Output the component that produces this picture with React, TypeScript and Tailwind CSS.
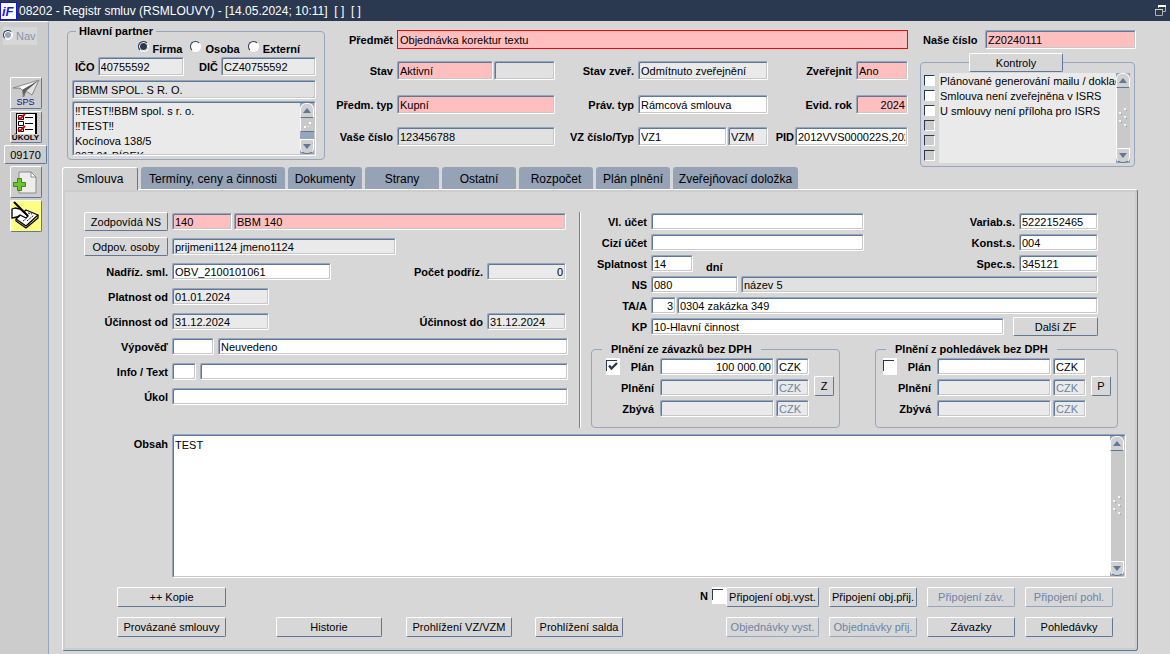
import type { ReactNode } from "react";
import clsx from "clsx";

type Tone = "white" | "locked" | "grey" | "pink";

const tones: Record<Tone, string> = {
  white: "bg-white",
  locked: "bg-[#eaeaea]",
  grey: "bg-[#e1e1e1]",
  pink: "bg-[#ffbfbf]",
};

const sunken =
  "rounded-[2px] border border-t-[#96a6bc] border-l-[#96a6bc] border-r-white border-b-white shadow-[inset_1px_1px_0_#5f7899,inset_-1px_-1px_0_#c8c8c8]";

type FieldProps = {
  id?: string;
  label?: string;
  value?: string;
  tone?: Tone;
  className?: string;
  disabled?: boolean;
};

function Field({ id, label, value = "", tone = "white", className, disabled }: FieldProps) {
  return (
    <input
      id={id}
      aria-label={label}
      type="text"
      defaultValue={value}
      disabled={disabled}
      className={clsx(
        "min-w-0 px-[2px] text-[11px] leading-[13px] outline-none disabled:text-[#6c84a6]",
        sunken,
        tones[tone],
        className,
      )}
    />
  );
}

function Label({ htmlFor, className, children }: { htmlFor: string; className?: string; children: ReactNode }) {
  return (
    <label htmlFor={htmlFor} className={clsx("shrink-0 whitespace-nowrap text-right text-[11px] font-bold leading-[14px]", className)}>
      {children}
    </label>
  );
}

function Button({ className, disabled, label, children }: { className?: string; disabled?: boolean; label?: string; children: ReactNode }) {
  return (
    <button
      type="button"
      disabled={disabled}
      aria-label={label}
      className={clsx(
        "flex shrink-0 items-center justify-center whitespace-nowrap rounded-[2px] border border-t-white border-l-white border-r-[#5f7899] border-b-[#5f7899] text-[11px] leading-[14px] disabled:border-r-[#96a6bc] disabled:border-b-[#96a6bc] disabled:text-[#6c84a6]",
        className,
      )}
    >
      {children}
    </button>
  );
}

function Radio({ id, text, checked }: { id: string; text: string; checked?: boolean }) {
  return (
    <div className="flex items-center gap-[4px]">
      <input
        id={id}
        type="radio"
        name="typPartnera"
        defaultChecked={checked}
        className="mb-[4px] size-[11px] shrink-0 appearance-none rounded-full border border-t-[#2b3950] border-l-[#2b3950] border-r-white border-b-white bg-white checked:bg-[#2b3950] checked:shadow-[inset_0_0_0_1px_white]"
      />
      <Label htmlFor={id}>{text}</Label>
    </div>
  );
}

function FlagBox({ id, label, checked }: { id: string; label: string; checked?: boolean }) {
  return (
    <span className="relative flex h-[17px] w-[14px] shrink-0 bg-white">
      <input
        id={id}
        aria-label={label}
        type="checkbox"
        defaultChecked={checked}
        className="peer mt-[2px] size-[11px] appearance-none border-t border-l border-[#2b3950] bg-white"
      />
      <svg viewBox="0 0 14 17" className="pointer-events-none absolute inset-0 hidden peer-checked:block" fill="none" stroke="#2b3950" strokeWidth="2.4">
        <path d="M3 7.5 5.5 10.5 11 5" />
      </svg>
    </span>
  );
}

function ScrollBar({ className, grip }: { className?: string; grip: "small" | "tall" }) {
  const arrow = "flex h-[15px] shrink-0 items-center justify-center border border-white border-b-[#5f7899] bg-[#d0d0d0]";
  return (
    <div aria-hidden="true" className={clsx("flex w-[14px] shrink-0 flex-col bg-[#96a6bc]", className)}>
      <div className={clsx(arrow, "rounded-t-[6px]")}>
        <svg width="8" height="5" viewBox="0 0 8 5" fill="#5f7899">
          <path d="M4 0 8 5H0z" />
        </svg>
      </div>
      <div
        className={clsx(
          "flex items-center justify-center border-l border-white bg-[#c9c9c9]",
          grip === "small" ? "h-[14px] border-b border-b-[#5f7899]" : "flex-1",
        )}
      >
        {grip === "small" ? (
          <svg width="8" height="6" viewBox="0 0 8 6" fill="white">
            <path d="M0 4h2v2H0zM5 0h2v2H5zM4 4h1v1H4z" />
          </svg>
        ) : (
          <svg width="9" height="20" viewBox="0 0 9 20" fill="#f4f4f4">
            <path d="M5 0h2v2H5zM0 4h2v2H0zM5 8h2v2H5zM0 12h2v2H0zM5 16h2v2H5z" />
            <path d="M7 2h1v1H7zM2 6h1v1H2zM7 10h1v1H7zM2 14h1v1H2zM7 18h1v1H7z" fill="#8a99ae" />
          </svg>
        )}
      </div>
      {grip === "small" && <div className="flex-1" />}
      <div className={clsx(arrow, "rounded-b-[6px]")}>
        <svg width="8" height="5" viewBox="0 0 8 5" fill="#5f7899">
          <path d="M0 0h8L4 5z" />
        </svg>
      </div>
    </div>
  );
}

function TitleBar() {
  return (
    <header className="flex h-[21px] shrink-0 items-center bg-[#2b3950] pr-[4px] text-white">
      <span className="flex h-[18px] w-[17px] shrink-0 items-center justify-center border border-[#1414e0] bg-white">
        <svg width="15" height="16" viewBox="0 0 15 16" aria-hidden="true" className="shrink-0">
          <text x="1" y="13" fontSize="13" fontWeight="bold" fontStyle="italic" fill="#1a1ad0" fontFamily="Liberation Sans, sans-serif">
            iF
          </text>
        </svg>
      </span>
      <h1 className="ml-[2px] flex-1 whitespace-pre text-[12px] leading-[16px]">
        08202 - Registr smluv (RSMLOUVY) - [14.05.2024; 10:11]  [ ]  [ ]
      </h1>
      <button type="button" aria-label="Obnovit okno">
        <svg width="11" height="11" viewBox="0 0 11 11" fill="none">
          <path d="M3.5 3V.5h7v6H8" stroke="#b0b0b0" />
          <path d="M3 1h8" stroke="white" strokeWidth="2" />
          <path d="M.5 4.5h7v6h-7z" fill="#2b3950" stroke="#b0b0b0" />
          <path d="M0 4.5h8" stroke="#d0d0d0" strokeWidth="1" />
        </svg>
      </button>
    </header>
  );
}

function SideBar() {
  return (
    <aside className="flex w-[49px] shrink-0 flex-col items-center rounded-tr-[3px] border-t border-r border-t-white border-r-[#96a6bc] bg-[#cccccc] pt-[5px] pl-[3px]">
      <div className="flex h-[18px] w-[34px] items-center gap-[3px] self-start bg-[#d7d7d7]">
        <input
          id="nav"
          type="radio"
          disabled
          className="mb-[3px] size-[10px] shrink-0 appearance-none rounded-full border border-t-[#2b3950] border-l-[#2b3950] border-r-white border-b-white bg-[#96a6bc] shadow-[inset_0_0_0_1px_white]"
        />
        <label htmlFor="nav" className="text-[11px] leading-[16px] text-[#8496b0]">
          Nav
        </label>
      </div>
      <div className="mt-[32px] flex flex-col items-center gap-[2px]">
        <Button className="h-[32px] w-[32px] flex-col">
          <svg width="28" height="19" viewBox="0 0 28 19" aria-hidden="true" className="shrink-0">
            <path d="M1 9 27 1 20 16 14 12z" fill="#b4b4b4" />
            <path d="M1 9 27 1 10 12 8 9z" fill="#f8f8f8" />
            <path d="M27 1 14 12 20 16z" fill="#e2e2e2" />
            <path d="M10 11 27 1 14 12 12 18z" fill="#5a5a5a" />
            <path d="M1 9 27 1 20 16 14 12M1 9h7l3 3v6l3-6" fill="none" stroke="#777" strokeWidth=".8" />
          </svg>
          <span className="text-[9px] leading-[9px] text-[#101090]">SPS</span>
        </Button>
        <Button className="h-[32px] w-[32px] flex-col">
          <svg width="23" height="21" viewBox="0 0 23 21" aria-hidden="true" className="shrink-0">
            <path d="M2 0h21v21H2z" fill="black" />
            <path d="M3 1h18v20H3z" fill="white" />
            <path d="M4.500 2.500h5v4h-5zM4.500 8.500h5v4h-5zM4.500 14.500h5v4h-5z" fill="white" stroke="black" />
            <path d="M11 4.500h8M11 10.500h8M11 16.500h8" stroke="black" />
            <path d="m4 4 2 2 5-5M4 16l2 2 5-5" fill="none" stroke="#e00000" strokeWidth="1.800" />
          </svg>
          <span className="text-[8px] font-bold leading-[8px] text-black">ÚKOLY</span>
        </Button>
        <Button className="h-[19px] w-[43px]">09170</Button>
        <Button label="Nový dokument" className="h-[32px] w-[32px]">
          <svg width="28" height="28" viewBox="0 0 28 28" className="shrink-0">
            <path d="M7 4h12l5 5v16H7z" fill="#ededed" stroke="#8b8b8b" />
            <path d="M19 4v5h5z" fill="white" stroke="#8b8b8b" />
            <path d="M5.500 10.500h4v4h4v4h-4v4h-4v-4h-4v-4h4z" fill="#6cc52c" stroke="#3a8712" />
          </svg>
        </Button>
        <Button label="Poznámky" className="h-[32px] w-[32px] bg-[#ffff84]">
          <svg width="30" height="30" viewBox="0 0 30 30" strokeLinejoin="round" className="shrink-0">
            <path d="m15 9 12 5-12 11L5 18z" fill="white" stroke="black" strokeWidth="1.300" />
            <path d="M27 14v3L15 27 5 20v-2" fill="none" stroke="black" strokeWidth="1.200" />
            <path d="m1 8 3-1 5 1 8 7-2 2-6-3-3 2-5 1z" fill="white" stroke="black" strokeWidth="1.300" />
            <path d="M3 1l14 14" stroke="black" strokeWidth="2" />
            <path d="M16 20l7-6M12 20l3-2M17 12l4 1" stroke="black" strokeWidth=".9" strokeDasharray="2 1" />
          </svg>
        </Button>
      </div>
    </aside>
  );
}

function Partner() {
  return (
    <fieldset className="mt-[3px] h-[136px] w-[258px] min-w-0 shrink-0 rounded-[4px] border border-[#96a6bc] px-[4px]">
      <legend className="ml-[4px] px-[3px] text-[11px] font-bold leading-[14px]">Hlavní partner</legend>
      <div className="flex justify-end gap-[8px] pt-[3px] pr-[20px]">
        <Radio id="firma" text="Firma" checked />
        <Radio id="osoba" text="Osoba" />
        <Radio id="externi" text="Externí" />
      </div>
      <div className="mt-[1px] flex items-center gap-[3px] pr-[4px] pl-[3px]">
        <Label htmlFor="ico">IČO</Label>
        <Field id="ico" value="40755592" tone="locked" className="h-[19px] flex-1" />
        <Label htmlFor="dic" className="ml-[12px]">DIČ</Label>
        <Field id="dic" value="CZ40755592" tone="locked" className="h-[19px] w-[95px]" />
      </div>
      <div className="mt-[4px] flex flex-col gap-[2px] pr-[4px]">
        <Field label="Název partnera" value="BBMM SPOL. S R. O." tone="grey" className="h-[19px]" />
        <div className={clsx("flex h-[55px] p-px", sunken, tones.locked)}>
          <textarea
            aria-label="Adresa partnera"
            className="min-w-0 flex-1 resize-none overflow-hidden px-[1px] pt-[1px] text-[11px] leading-[15px] outline-none"
            defaultValue={"‼TEST‼BBM spol. s r. o.\n‼TEST‼\nKocínova 138/5\n397 01 PÍSEK"}
          />
          <ScrollBar grip="small" />
        </div>
      </div>
    </fieldset>
  );
}

function Summary() {
  const row = "flex items-center gap-[4px]";
  return (
    <div className="flex min-w-0 flex-1 flex-col pt-[9px]">
      <div className={row}>
        <Label htmlFor="predmet" className="w-[68px]">Předmět</Label>
        <input
          id="predmet"
          type="text"
          defaultValue="Objednávka korektur textu"
          className="h-[19px] min-w-0 flex-1 border border-[#ff0000] bg-[#ffbfbf] px-[2px] text-[11px] leading-[13px] outline-none"
        />
      </div>
      <div className={clsx(row, "mt-[12px]")}>
        <Label htmlFor="stav" className="w-[68px]">Stav</Label>
        <div className="flex w-[158px] gap-px">
          <Field id="stav" value="Aktivní" tone="pink" className="h-[19px] w-[96px]" />
          <Field label="Stav doplněk" tone="grey" className="h-[19px] flex-1" />
        </div>
        <Label htmlFor="stavZver" className="w-[75px]">Stav zveř.</Label>
        <Field id="stavZver" value="Odmítnuto zveřejnění" tone="locked" className="h-[19px] flex-1" />
        <Label htmlFor="zverejnit" className="w-[80px]">Zveřejnit</Label>
        <Field id="zverejnit" value="Ano" tone="pink" className="h-[19px] w-[52px]" />
      </div>
      <div className={clsx(row, "mt-[15px]")}>
        <Label htmlFor="predmTyp" className="w-[68px]">Předm. typ</Label>
        <Field id="predmTyp" value="Kupní" tone="pink" className="h-[19px] w-[158px]" />
        <Label htmlFor="pravTyp" className="w-[75px]">Práv. typ</Label>
        <Field id="pravTyp" value="Rámcová smlouva" className="h-[19px] flex-1" />
        <Label htmlFor="evidRok" className="w-[80px]">Evid. rok</Label>
        <Field id="evidRok" value="2024" tone="pink" className="h-[19px] w-[52px] text-right" />
      </div>
      <div className={clsx(row, "mt-[13px]")}>
        <Label htmlFor="vaseCislo" className="w-[68px]">Vaše číslo</Label>
        <Field id="vaseCislo" value="123456788" tone="grey" className="h-[19px] w-[158px]" />
        <Label htmlFor="vzCislo" className="w-[75px]">VZ číslo/Typ</Label>
        <div className="flex min-w-0 flex-1 gap-px">
          <Field id="vzCislo" value="VZ1" className="h-[19px] flex-1" />
          <Field label="Typ VZ" value="VZM" tone="locked" className="h-[19px] w-[40px]" />
        </div>
        <div className="flex w-[136px] items-center justify-end gap-px">
          <Label htmlFor="pid">PID</Label>
          <Field id="pid" value="2012VVS000022S,2023" className="h-[19px] w-[113px]" />
        </div>
      </div>
    </div>
  );
}

const checks = [
  "Plánované generování mailu / dokladu",
  "Smlouva není zveřejněna v ISRS",
  "U smlouvy není příloha pro ISRS",
  "",
  "",
  "",
];

function Checks() {
  return (
    <div className="w-[216px] shrink-0 pt-[9px]">
      <div className="flex items-center justify-between pl-[3px]">
        <Label htmlFor="naseCislo">Naše číslo</Label>
        <Field id="naseCislo" value="Z20240111" tone="pink" className="h-[19px] w-[151px]" />
      </div>
      <fieldset className="mt-[4px] w-[215px] min-w-0 rounded-[4px] border border-[#96a6bc] pr-[4px] pb-[3px] pl-[3px]">
        <legend className="ml-[45px]">
          <Button className="h-[19px] w-[94px]">Kontroly</Button>
        </legend>
        <div className="mt-[1px] flex">
          <ul className="min-w-0 flex-1">
            {checks.map((text, i) => (
              <li key={i} className="flex h-[15px]">
                <input
                  id={`kontrola${i}`}
                  type="checkbox"
                  aria-label={text || "Prázdná kontrola"}
                  disabled={!text}
                  className={clsx(
                    "mt-[2px] mr-[4px] size-[11px] shrink-0 appearance-none border border-t-[#2b3950] border-l-[#2b3950] border-r-white border-b-white bg-white disabled:bg-[#cccccc]",
                    i === 0 && "outline outline-[#bcdcfa]",
                  )}
                />
                <label htmlFor={`kontrola${i}`} className="min-w-0 flex-1 overflow-hidden whitespace-nowrap bg-[#eaeaea] pl-[1px] text-[11px] leading-[16px]">
                  {text}
                </label>
              </li>
            ))}
          </ul>
          <ScrollBar grip="tall" />
        </div>
      </fieldset>
    </div>
  );
}

const tabs = [
  { text: "Termíny, ceny a činnosti", width: "w-[144px]" },
  { text: "Dokumenty", width: "w-[74px]" },
  { text: "Strany", width: "w-[74px]" },
  { text: "Ostatní", width: "w-[74px]" },
  { text: "Rozpočet", width: "w-[74px]" },
  { text: "Plán plnění", width: "w-[74px]" },
  { text: "Zveřejňovací doložka", width: "w-[125px]" },
];

function Tabs() {
  return (
    <div role="tablist" className="flex h-[22px] items-end gap-[3px] text-[12px] leading-[16px]">
      <button
        type="button"
        role="tab"
        aria-selected="true"
        className="relative -mb-px h-[23px] w-[76px] rounded-t-[3px] border-t border-r border-l border-white border-r-[#5f7899] bg-[#d2d2d2]"
      >
        Smlouva
      </button>
      {tabs.map((tab) => (
        <button
          key={tab.text}
          type="button"
          role="tab"
          aria-selected="false"
          className={clsx("h-[22px] whitespace-nowrap rounded-t-[3px] bg-[#96a3b6] pt-[2px]", tab.width)}
        >
          {tab.text}
        </button>
      ))}
    </div>
  );
}

function Basics() {
  const row = "flex h-[19px] items-center gap-[4px]";
  return (
    <div className="flex min-w-0 flex-1 flex-col gap-[6px]">
      <div className={row}>
        <Button className="h-[19px] w-[84px]">Zodpovídá NS</Button>
        <div className="flex flex-1 gap-[2px] pr-[2px]">
          <Field label="Zodpovídá NS kód" value="140" tone="pink" className="h-[17px] w-[60px]" />
          <Field label="Zodpovídá NS název" value="BBM 140" tone="pink" className="h-[17px] flex-1" />
        </div>
      </div>
      <div className={row}>
        <Button className="h-[19px] w-[84px]">Odpov. osoby</Button>
        <Field label="Odpovědné osoby" value="prijmeni1124 jmeno1124" tone="locked" className="h-[17px] w-[224px]" />
      </div>
      <div className={row}>
        <Label htmlFor="nadriz" className="w-[84px]">Nadříz. sml.</Label>
        <Field id="nadriz" value="OBV_2100101061" className="h-[17px] w-[159px]" />
        <Label htmlFor="podriz" className="ml-auto">Počet podříz.</Label>
        <Field id="podriz" value="0" tone="locked" className="mr-[2px] h-[17px] w-[79px] text-right" />
      </div>
      <div className={row}>
        <Label htmlFor="platnost" className="w-[84px]">Platnost od</Label>
        <Field id="platnost" value="01.01.2024" tone="locked" className="h-[17px] w-[97px]" />
      </div>
      <div className={row}>
        <Label htmlFor="ucinnostOd" className="w-[84px]">Účinnost od</Label>
        <Field id="ucinnostOd" value="31.12.2024" tone="locked" className="h-[17px] w-[97px]" />
        <Label htmlFor="ucinnostDo" className="ml-auto">Účinnost do</Label>
        <Field id="ucinnostDo" value="31.12.2024" tone="locked" className="mr-[2px] h-[17px] w-[79px]" />
      </div>
      <div className={row}>
        <Label htmlFor="vypoved" className="w-[84px]">Výpověď</Label>
        <Field id="vypoved" className="h-[17px] w-[42px]" />
        <Field label="Výpověď text" value="Neuvedeno" className="h-[17px] flex-1" />
      </div>
      <div className={row}>
        <Label htmlFor="info" className="w-[84px]">Info / Text</Label>
        <Field id="info" className="h-[17px] w-[24px]" />
        <Field label="Info text" className="h-[17px] flex-1" />
      </div>
      <div className={row}>
        <Label htmlFor="ukol" className="w-[84px]">Úkol</Label>
        <Field id="ukol" className="h-[17px] flex-1" />
      </div>
    </div>
  );
}

type FulfilmentProps = {
  id: string;
  title: string;
  plan: string;
  checked?: boolean;
  letter: string;
  className: string;
  inset: string;
};

function Fulfilment({ id, title, plan, checked, letter, className, inset }: FulfilmentProps) {
  const rows = [
    { key: "plan", text: "Plán", value: plan },
    { key: "plneni", text: "Plnění", value: "" },
    { key: "zbyva", text: "Zbývá", value: "" },
  ];
  return (
    <fieldset className={clsx("h-[86px] min-w-0 rounded-[4px] border border-[#96a6bc]", className)}>
      <legend className="ml-[10px] px-[9px] text-[11px] font-bold leading-[14px]">{title}</legend>
      <div className={clsx("flex pt-[2px]", inset)}>
        <FlagBox id={`${id}Flag`} label={title} checked={checked} />
        <div className="flex flex-col gap-[4px]">
          {rows.map((r, i) => (
            <div key={r.key} className="flex h-[17px] items-center gap-[2px]">
              <Label htmlFor={id + r.key} className="mr-[4px] w-[34px]">{r.text}</Label>
              <Field id={id + r.key} value={r.value} tone={i ? "locked" : "white"} className="h-[17px] w-[114px] text-right" />
              <Field label={`${r.text} měna`} value="CZK" tone={i ? "locked" : "white"} disabled={i > 0} className="h-[17px] w-[33px]" />
            </div>
          ))}
        </div>
        <Button className="mt-[18px] ml-[5px] h-[20px] w-[20px]">{letter}</Button>
      </div>
    </fieldset>
  );
}

function Payment() {
  const row = "flex h-[17px] items-center";
  return (
    <div className="flex w-[527px] shrink-0 flex-col pt-px">
      <div className="flex flex-col gap-[4px] pr-[20px]">
        <div className={row}>
          <Label htmlFor="vlUcet" className="mr-[4px] w-[56px]">Vl. účet</Label>
          <Field id="vlUcet" className="h-[17px] w-[213px]" />
          <Label htmlFor="variab" className="mr-[4px] ml-auto">Variab.s.</Label>
          <Field id="variab" value="5222152465" className="h-[17px] w-[79px]" />
        </div>
        <div className={row}>
          <Label htmlFor="ciziUcet" className="mr-[4px] w-[56px]">Cizí účet</Label>
          <Field id="ciziUcet" className="h-[17px] w-[213px]" />
          <Label htmlFor="konst" className="mr-[4px] ml-auto">Konst.s.</Label>
          <Field id="konst" value="004" className="h-[17px] w-[79px]" />
        </div>
        <div className={row}>
          <Label htmlFor="splatnost" className="mr-[4px] w-[56px]">Splatnost</Label>
          <Field id="splatnost" value="14" className="h-[17px] w-[42px]" />
          <span className="ml-[13px] pt-[6px] text-[11px] font-bold leading-[14px]">dní</span>
          <Label htmlFor="spec" className="mr-[4px] ml-auto">Spec.s.</Label>
          <Field id="spec" value="345121" className="h-[17px] w-[79px]" />
        </div>
        <div className={row}>
          <Label htmlFor="ns" className="mr-[4px] w-[56px]">NS</Label>
          <Field id="ns" value="080" className="mr-[3px] h-[17px] w-[87px]" />
          <Field label="NS název" value="název 5" tone="grey" className="h-[17px] flex-1" />
        </div>
        <div className={row}>
          <Label htmlFor="ta" className="mr-[4px] w-[56px]">TA/A</Label>
          <Field id="ta" value="3" className="mr-px h-[17px] w-[25px] text-right" />
          <Field label="Zakázka" value="0304 zakázka 349" className="h-[17px] flex-1" />
        </div>
        <div className={row}>
          <Label htmlFor="kp" className="mr-[4px] w-[56px]">KP</Label>
          <Field id="kp" value="10-Hlavní činnost" className="mr-[9px] h-[17px] flex-1" />
          <Button className="h-[19px] w-[85px]">Další ZF</Button>
        </div>
      </div>
      <div className="mt-[7px] flex justify-between">
        <Fulfilment id="zav" title="Plnění ze závazků bez DPH" plan="100 000.00" checked letter="Z" className="w-[249px]" inset="pl-[14px]" />
        <Fulfilment id="pohl" title="Plnění z pohledávek bez DPH" plan="" letter="P" className="w-[243px]" inset="pl-[7px]" />
      </div>
    </div>
  );
}

function Actions() {
  return (
    <div className="mt-[9px] flex flex-col gap-[10px] pr-[24px] pl-[33px]">
      <div className="flex items-start gap-[10px]">
        <Button className="mr-auto h-[20px] w-[109px]">++ Kopie</Button>
        <div className="-mr-[10px] flex items-center gap-[4px]">
          <Label htmlFor="priznakN">N</Label>
          <FlagBox id="priznakN" label="N" />
        </div>
        <Button className="h-[20px] w-[93px]">Připojení obj.vyst.</Button>
        <Button className="h-[20px] w-[88px]">Připojení obj.přij.</Button>
        <Button className="h-[20px] w-[88px]" disabled>Připojení záv.</Button>
        <Button className="h-[20px] w-[88px]" disabled>Připojení pohl.</Button>
      </div>
      <div className="flex gap-[10px]">
        <Button className="mr-[40px] h-[20px] w-[109px]">Provázané smlouvy</Button>
        <Button className="mr-[14px] h-[20px] w-[106px]">Historie</Button>
        <Button className="mr-[13px] h-[20px] w-[106px]">Prohlížení VZ/VZM</Button>
        <Button className="mr-auto h-[20px] w-[88px]">Prohlížení salda</Button>
        <Button className="h-[20px] w-[93px]" disabled>Objednávky vyst.</Button>
        <Button className="h-[20px] w-[88px]" disabled>Objednávky přij.</Button>
        <Button className="h-[20px] w-[88px]">Závazky</Button>
        <Button className="h-[20px] w-[88px]">Pohledávky</Button>
      </div>
    </div>
  );
}

export default function App() {
  return (
    <div className="flex min-h-screen flex-col bg-[#d7d7d7] font-['Liberation_Sans',Arial,sans-serif] text-black">
      <TitleBar />
      <div className="flex flex-1">
        <SideBar />
        <main className="flex min-w-0 flex-1 flex-col pr-[32px] pb-[3px] pl-[13px]">
          <div className="flex h-[146px] pr-[2px] pl-[5px]">
            <Partner />
            <Summary />
            <div className="w-[12px] shrink-0" />
            <Checks />
          </div>
          <Tabs />
          <section className="flex flex-1 flex-col rounded-[3px] rounded-tl-none border border-t-white border-l-white border-r-[#5f7899] border-b-[#5f7899] pt-[22px] pb-[13px] pl-[21px] shadow-[inset_2px_2px_0_#cdcdcd,inset_-2px_-2px_0_#cdcdcd]">
            <div className="flex pr-[19px]">
              <Basics />
              <div className="mr-[10px] ml-[11px] w-[2px] border-r border-l border-l-[#808080] border-r-white" />
              <Payment />
            </div>
            <div className="mt-[6px] flex flex-1 gap-[4px] pr-[11px]">
              <Label htmlFor="obsah" className="w-[84px] pt-[3px]">Obsah</Label>
              <div className={clsx("flex flex-1 p-px", sunken, tones.white)}>
                <textarea
                  id="obsah"
                  className="min-w-0 flex-1 resize-none overflow-hidden px-[1px] pt-[2px] text-[11px] leading-[14px] outline-none"
                  defaultValue="TEST"
                />
                <ScrollBar grip="tall" />
              </div>
            </div>
            <Actions />
          </section>
        </main>
      </div>
    </div>
  );
}
